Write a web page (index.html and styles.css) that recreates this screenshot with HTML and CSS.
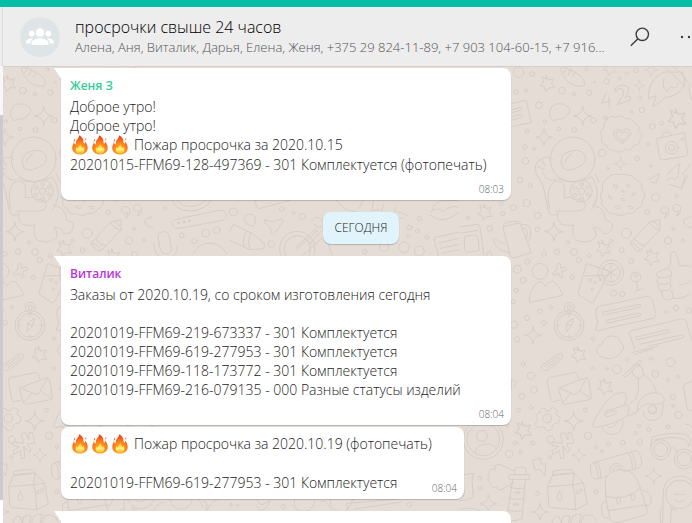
FILE: index.html
```html
<!DOCTYPE html>
<html lang="ru">
<head>
<meta charset="utf-8">
<title>просрочки свыше 24 часов</title>
<meta name="viewport" content="width=device-width, initial-scale=1">
<link rel="stylesheet" href="styles.css">
</head>
<body>
<svg class="defs" aria-hidden="true">
  <defs>
    <radialGradient id="flame-outer" cx="50%" cy="80%" r="75%">
      <stop offset="0" stop-color="#ffb62e"/><stop offset=".5" stop-color="#ff8a1c"/><stop offset="1" stop-color="#ec3f1c"/>
    </radialGradient>
    <linearGradient id="flame-inner" x1="0" y1="0" x2="0" y2="1">
      <stop offset="0" stop-color="#ffc62e"/><stop offset=".6" stop-color="#fff27a"/><stop offset="1" stop-color="#ffb52b"/>
    </linearGradient>
    <symbol id="fire" viewBox="0 0 16 20">
      <path fill="url(#flame-outer)" d="M6.800.3C9.600 1.400 11.600 3.800 11.400 6.600c0 1.200.4 1.900 1 1.900.8-.1.900-1 .6-2.100 1.600 1.500 2.700 4.200 2.700 6.700 0 4.100-3.400 6.500-7.700 6.500S.300 17.200.300 13.100c0-2.300.8-4.200 2-5.500 0 1 .3 1.700.9 1.800.8 0 .8-1.200.8-2.200C4.200 4.400 7.600 3.400 6.800.3z"/>
      <path fill="#f4611d" d="M2.300 3.800c.9.900.9 2.100.1 2.800-.8-.8-.6-1.900-.1-2.800zM13.700 3.200c.8.800.8 1.700.2 2.400-.7-.700-.7-1.600-.2-2.400zM1.100 6.500l.5 1-.6.5z"/>
      <path fill="url(#flame-inner)" d="M8.300 8.500c.1 2.200 1.800 3.200 2 4.600.6-.2.800-.8.800-1.400 1.100 1.200 1.500 2.600 1.200 4-.5 1.900-2.200 2.900-4.300 2.900-2.200 0-4-1.200-4.200-3.200-.2-1.300.2-2.400.9-3.300.1.800.4 1.200.9 1.200C6 11.500 8.300 10.800 8.300 8.500z"/>
    </symbol>
    <path id="star" d="M-4-22 L4-8 20-12 12 3 22 16 5 15-4 27-9 12-22 9-11-2-16-18-3-11Z"/>
    <path id="spark" d="M0-28Q2-2 28 0 2 2 0 28-2 2-28 0-2-2 0-28Z"/>
    <path id="plus" d="M-5-20q6-6 9 0l1 12 12-4q8 2 4 9L8 3l4 14q-3 7-8 2L-1 7l-13 6q-8-2-3-8l9-7z"/>
    <g id="drift">
      <g transform="translate(460 0) scale(.33333)">
        <use href="#star" x="262" y="248"/><use href="#spark" transform="translate(538 257) scale(.6)"/>
        <use href="#spark" x="368" y="348"/><use href="#spark" transform="translate(252 412) scale(.9)"/>
        <use href="#star" transform="translate(651 353) scale(1.200)"/><use href="#spark" transform="translate(482 491) scale(.7)"/>
        <use href="#spark" transform="translate(574 210) scale(.7)"/><use href="#star" transform="translate(450 202) scale(.9)"/>
        <path d="M301 207q4-10 14-5l46 24q18 20 10 32-28 3-46-12-18-18-24-39zM320 200l-8 18M333 206l-9 20M345 214l-8 18"/>
        <path d="M440 276l-16 34 28-8M446 290l2 34M467 275q10-16 20-7 10 12-5 28l-10 18 40-14-2-12-16 4q18-20 8-32-20-12-36 6z"/>
        <path d="M566 275q10-48 50-59l50 0q14 24 2 48-20 28-52 28-12 14-39 29l12-35-23 10zM620 206l56 54M612 236q-8 25 10 40 4-20 16-14 14 7 17-14M640 200q30 20 45 50M690 252q-8 20 6 50"/>
        <path d="M150 312l48-12 16 68-60 12M153 330l30-8q6 2 2 8l-30 8M155 350l28-7q6 3 2 9l-30 8"/>
        <path d="M272 326q10-18 28-14 12-4 22 8 14 8 2 22-10 16-30 16-18 8-24-6-4-14 2-26z"/>
        <path d="M440 360q12-16 26-8 18-10 30 4 18-4 26 12 18 6 14 22 16 14 4 28 0 18-18 18-10 20-26 12-20 16-34 2-18 4-22-14-22-8-14-26-10-16 6-26-2-20 8-24z"/>
        <path d="M487 430q-32-16-26-34 10-16 26-2 10-14 24-2 10 14-24 38zM487 422q-24-12-18-24 8-10 18 4 8-12 18-3 5 10-18 23z"/>
        <path d="M591 416l82-18 10 62q0 8-6 8l-72 12q-6-2-7-8zM606 410l2-10 20-5 4 8"/><circle cx="635" cy="443" r="19"/><circle cx="635" cy="443" r="9"/><circle cx="666" cy="418" r="3"/>
        <circle cx="338" cy="478" r="67"/><path d="M304 490q-4-26 20-34 36-14 50 10 10 22-20 36-46 22-50-12zM316 488q0-14 20-28M230 525q-16-36 18-50 16-8 30 4M246 480l10 18M232 500l20 8"/>
        <path d="M622 525q16-24 38-36l-6 36M666 525l26-34"/>
        <circle cx="176" cy="217" r="16"/><circle cx="217" cy="222" r="7"/><circle cx="306" cy="272" r="10"/><circle cx="168" cy="276" r="7"/><circle cx="198" cy="271" r="5"/><circle cx="237" cy="316" r="10"/><circle cx="342" cy="282" r="5"/><circle cx="388" cy="278" r="8"/><circle cx="440" cy="244" r="8"/><circle cx="478" cy="235" r="5"/><circle cx="500" cy="220" r="5"/><circle cx="528" cy="212" r="7"/><circle cx="403" cy="247" r="3"/><circle cx="379" cy="208" r="5"/><circle cx="539" cy="294" r="6"/><circle cx="546" cy="330" r="8"/><circle cx="514" cy="336" r="4"/><circle cx="577" cy="380" r="9"/><circle cx="605" cy="370" r="6"/><circle cx="564" cy="433" r="5"/><circle cx="426" cy="459" r="11"/><circle cx="400" cy="361" r="8"/><circle cx="435" cy="353" r="5"/><circle cx="343" cy="390" r="7"/><circle cx="297" cy="387" r="5"/><circle cx="254" cy="364" r="5"/><circle cx="202" cy="394" r="6"/><circle cx="195" cy="441" r="7"/><circle cx="222" cy="447" r="4"/><circle cx="196" cy="483" r="10"/><circle cx="531" cy="475" r="7"/><circle cx="443" cy="506" r="4"/><circle cx="572" cy="498" r="4"/>
      </g>
      <g transform="translate(460 175) scale(.33333)">
        <path d="M232 0q18 24 22 50 8 52 14 64 12 14 28 0M246-8l14 18q20 10 28 2M268 100q-12-60 14-80 20-8 30 10 4 22 0 38 20-6 36 6 26-2 28 14 0 20-26 20l-64 0M293 114q-4 22 12 34 14 6 36 2-8 36 10 46 30 12 52-6 12-14-4-32 26-2 28 16 22 8 30-16 4-18-20-22-4-28-18-38l-22-8M295 10q40 24 100-4 20 30 16 58-4 26-16 40M405-5l12 26"/>
        <circle cx="364" cy="48" r="33"/><circle cx="365" cy="49" r="10"/><circle cx="365" cy="27" r="5"/><circle cx="384" cy="37" r="5"/><circle cx="384" cy="59" r="5"/><circle cx="365" cy="71" r="5"/><circle cx="345" cy="60" r="5"/><circle cx="345" cy="38" r="5"/>
        <path d="M440 10q16-16 34-12l24 0q20 2 30 16 20 10 18 28 16 18 2 34 0 20-18 26-10 18-28 12-20 14-38 2-20 4-26-16-18-8-12-24-10-18 2-30-4-24 12-36zM461 28q16 2 12 12-14 0-12-12zM500 30q10-6 12 4-8 8-12-4zM446 62q12 0 10 10-10 2-10-10zM484 70q12-2 10 8-10 4-10-8zM516 60q2-12 12-6 0 10-12 6zM466 96q10-8 16 2-8 8-16-2zM505 94q10-4 14 6-10 6-14-6zM484 48q6-6 12 2-4 6-12-2z"/>
        <path d="M568 14l28-18M575 22l14 2 10-28M622 14q14-12 22 0l12-10M628 28l36 12 12-40M664 42l20-42"/>
        <circle cx="587" cy="67" r="12"/><circle cx="649" cy="62" r="5"/><circle cx="562" cy="112" r="7"/>
        <path d="M622 98q-18-12-20 8 4 16 18 6-2 14-8 18 16-4 14-26zM658 92q-18-12-20 8 4 16 18 6-2 14-8 18 16-6 14-26zM692 126q-24 4-20 18 2 10 24 14"/>
        <path d="M512 202l56-60 32-8 0 30-58 62q-8 4-14 0l-16-18zM568 142q10 20 32 22M524 190q10 20 30 22M580 138l16 14M512 202q14 4 30 24"/>
        <circle cx="499" cy="175" r="15"/><circle cx="454" cy="197" r="5"/><circle cx="624" cy="197" r="11"/><circle cx="669" cy="197" r="5"/><circle cx="639" cy="162" r="4"/><circle cx="485" cy="225" r="7"/><circle cx="514" cy="259" r="7"/>
        <use href="#star" x="430" y="218"/><use href="#star" x="576" y="244"/><use href="#star" x="75" y="109"/><use href="#spark" x="282" y="170"/>
        <circle cx="180" cy="14" r="8"/><circle cx="210" cy="32" r="6"/><circle cx="200" cy="84" r="11"/><circle cx="160" cy="97" r="9"/><circle cx="123" cy="86" r="6"/><circle cx="129" cy="116" r="6"/><circle cx="233" cy="122" r="10"/><circle cx="232" cy="163" r="7"/><circle cx="89" cy="161" r="8"/><circle cx="24" cy="128" r="5"/><circle cx="324" cy="202" r="5"/><circle cx="342" cy="231" r="10"/><circle cx="291" cy="230" r="8"/><circle cx="252" cy="237" r="7"/><circle cx="356" cy="255" r="8"/><circle cx="388" cy="242" r="6"/><circle cx="202" cy="260" r="8"/><circle cx="172" cy="283" r="12"/><circle cx="190" cy="316" r="9"/><circle cx="169" cy="346" r="6"/><circle cx="337" cy="307" r="6"/>
        <path d="M0 156l50-8q8 0 10 8l12 84M2 174l50-8M14 184l32-4q6 2 8 10l4 36-36 6q-6-2-8-8zM130 155l50-12 34 90-52 16q-8 0-12-10zM130 155q2-16 20-14 20-6 30 2M184 150q26-8 28 16 2 24-10 38M186 160q14-4 16 12l-4 22M134 206q-14 0-26-14-6-4-8 2 6 32 46 38M78 246q8-30 16-12l4 14"/>
        <circle cx="240" cy="289" r="24"/><path d="M208 378q0-40 30-58 12-2 18 14 12-18 26-14 16 14 26 36 0 6-6 6l-88 20q-6 0-6-4z"/><use href="#plus" x="297" y="288"/>
        <path d="M381 266l68 24-48 90q-4 4-10 2l-34-22q-4-4-2-10zM374 302l70 0"/><circle cx="453" cy="293" r="38"/><circle cx="453" cy="293" r="28"/><path d="M430 278l46 30M453 265v56M430 309l46-32"/><circle cx="390" cy="315" r="5"/><circle cx="420" cy="313" r="4"/><circle cx="406" cy="323" r="4"/><circle cx="397" cy="343" r="4"/>
        <circle cx="527" cy="306" r="15"/><circle cx="527" cy="302" r="5"/><path d="M530 321l4 24M525 349l24-8"/><circle cx="461" cy="355" r="9"/><circle cx="487" cy="357" r="8"/>
        <path d="M632 236q6-12 14-4 8 18 12 42 26-6 34 2M632 236q4 30-8 44l-22 8q-18 6-10 18l22 2 20-6q4-14-8-18M596 308q-10 12 0 20l28-2q14-8 6-22M596 328q-4 16 8 20l22-2q10-8 6-20M604 348q0 22 16 28l18-6q4-14-6-24M658 330q20 0 34-12M640 370q26 4 52-14"/>
        <circle cx="327" cy="451" r="45"/><circle cx="327" cy="451" r="36"/><circle cx="328" cy="397" r="15"/><circle cx="328" cy="397" r="6"/><path d="M339 430l-20 16 0 24 16-18zM319 446l16 6M327 416v8M327 480v8M290 451h8M356 451h8"/>
        <path d="M410 402q0-6 8-8l144-30q10 0 14 8l12 44q0 10-8 14l-130 28-36 10q-8 0-8-6l8-18q-10-26-4-42zM428 412l110-24q8 2 4 8l-110 24q-8 0-4-8zM440 436l96-22q10 0 6 8l-98 22q-10 0-4-8zM510 480q-8-6 2-12l150-36q12-2 16 6l18 60M510 480l14 42M530 486l92-22q8 0 6 8l-94 22q-10 0-4-8zM540 508l124-28q10 2 6 8l-106 26"/>
        <path d="M410 525q2-14 16-18 8-26 34-24 20 4 22 20 12 8 8 22"/><use href="#spark" transform="translate(219 481) scale(.9)"/>
        <circle cx="240" cy="409" r="7"/><circle cx="273" cy="397" r="5"/><circle cx="201" cy="429" r="8"/><circle cx="252" cy="443" r="7"/><circle cx="162" cy="449" r="11"/><circle cx="171" cy="493" r="8"/><circle cx="160" cy="380" r="6"/><circle cx="399" cy="491" r="5"/><circle cx="648" cy="399" r="8"/><circle cx="619" cy="411" r="5"/><circle cx="687" cy="407" r="8"/>
      </g>
      <g transform="translate(460 350) scale(.33333)">
        <path d="M246 46l42-30q14-8 20 0 0 10-10 18l-34 26q-16 6-20-4zM254 48l38-26q10-2 4 6l-34 24M408 0q10 28 42 26 30-4 36-26M515 8l80-20M520 14l60-18"/>
        <use href="#star" x="356" y="12"/><use href="#star" x="435" y="108"/><use href="#star" transform="translate(190 238) scale(1.100)"/>
        <path d="M300 150l-20 5q-8-2-8-8l-10-54q0-8 6-10l78-16q8 2 10 20M298 113l80-30q6 0 8 8l8 50q0 8-6 8l-72 14q-6 0-8-6l-12-36zM298 113l44 20q10 2 14-8l24-40M306 160l26-30M358 122l34 24"/>
        <path d="M240 186q-2-12 12-12l6 8 12 0q4-14 16-6 10 4 2 16l8 8q8-2 2 14-4 10-14 6l-8 8q4 12-10 14-10 2-12-10l-10-2q-10 8-16-4-4-10 4-14l0-8q-10-8 8-18z"/><circle cx="262" cy="205" r="13"/>
        <use href="#spark" x="341" y="213"/><use href="#spark" transform="translate(357 316) scale(.75)"/><use href="#spark" transform="translate(581 378) scale(.9)"/><use href="#spark" transform="translate(240 486) scale(.9)"/><use href="#spark" transform="translate(85 461) scale(.9)"/>
        <path d="M302 252l12-4 10 22 0-22 10 0 8 32q-12 0-24 2l12 18q-2 8-8 6l-14-18 4 36-10 2-4-24-20 12-2-12 20-12-20-4 0-10 30 4z"/>
        <path d="M398 224q24-60 66-92 18-8 34-2 4 20-6 36-28 10-56 18M398 224q0 10 10 8 60-10 96-36l4-22q-4-12-18-8M436 190q30-14 34-4-4 12-32 14-6-4-2-10zM424 230q8 22 36 24 28-4 30-42M440 226q14 18 30-8M490 76l50-46q6 4-2 12l-40 38q-8 4-8-4z"/><ellipse cx="533" cy="64" rx="16" ry="22" transform="rotate(-25 533 64)"/><path d="M534 86q10 56-24 76M552 74q28 20 38 54M532 182q-4-36 36-52 38-8 46 20-2 12-16 12l-40 0q-16 10-26 20zM534 184l-26 14M550 184q-2 26 30 28 30-4 30-48M564 180q8 16 22 8 8-14-2-22"/><circle cx="577" cy="179" r="12"/>
        <path d="M696 92l-24 12q-4 6 0 14l10 60 14 4M676 222q10 0 20 8"/>
        <circle cx="602" cy="299" r="30"/><circle cx="602" cy="299" r="21"/><circle cx="673" cy="327" r="30"/><circle cx="673" cy="327" r="21"/><path d="M572 288l4-26q50-18 100-10 20 8 14 34M584 270q50-14 88-2 12 4 14 20M631 296q10-10 20 10"/>
        <circle cx="660" cy="433" r="43"/><path d="M608 520l2-100q6-40 50-42 34 0 46 34M645 434q6-6 12 0M662 434q6-6 12 0M645 450q14 14 28-2M602 520l-2-40q8-10 10-6M636 476q-6 20-4 42M630 470q10 8 20 10"/>
        <path d="M391 350q0-8 10-12l124-36q14 2 20 26 2 20-10 26l-46 12M391 350q-2 32 14 38l38-10M410 336q14 14 12 48M402 338q14 20 12 48M504 308q16 22 12 48M514 306q14 20 12 48M450 364q-2-22 20-24 18 2 16 22M460 360q0-12 12-12 6 2 6 10M436 388q6-20 34-28 32-4 48 10 18 22 26 54l18 60q0 10-16 14l-74 20q-16 0-22-12l-12-60zM438 426q-4 12 2 14 60 14 104-28M470 444q6-6 10 0l2 14q-2 8-8 4zM513 434q6-6 10 0l2 12q-2 8-8 4zM548 420q20 2 26 28 0 18-16 22M436 456q-12 0-12 16l4 24q6 12 16 8M440 470l6 12 114-18"/>
        <path d="M263 410l15-34 65-6 27 29 12 62-34 18-74-6q-8 0-8-8zM263 410l76-6 31-5M339 404q8 40 8 74M278 376v-12q30-8 60-4l5 10M278 376q40-8 65-6l-6 34M298 424q-14 26 0 28 16-2 0-28zM349 424l16-8q6 4 0 8l-14 8q-6-2-2-8z"/>
        <path d="M218 332l24-8 2 18 14 0-4 36-14-20-14 2z"/>
        <path d="M148 374h60v14h-60zM164 374v-18q16-10 34 0v18M158 388l-18 118q20 12 46 0l10-118M150 412q20 8 44 2M146 444q20 8 46 2M144 480q20 8 44 2M166 428q8-14 14 0zM160 464q8-14 16 0zM164 364l-44-20q-20-2-14 14-22-4-18 10-8 6 0 14-10 8 2 16 4 20 20 12 2 14 16 8l34-20"/>
        <circle cx="70" cy="268" r="60"/><circle cx="70" cy="268" r="49"/><circle cx="66" cy="258" r="16"/><path d="M44 308q10-28 36-26 24 0 30 18M0 376l40-6-4 20 4 50q-10 10-40 12M0 440l4-12 6 12 4-20M0 478q24-10 60 4"/>
        <path d="M276 520q0-20 20-22l8 20M304 520l4-20q14-6 22-2l-4 22M332 520l6-22q16-8 26-4l-6 26M362 520l10-24q30-6 38 16M154 88l16 8-8 18M154 120v-30"/>
        <circle cx="190" cy="42" r="6"/><circle cx="213" cy="77" r="11"/><circle cx="222" cy="120" r="10"/><circle cx="185" cy="139" r="9"/><circle cx="175" cy="180" r="6"/><circle cx="214" cy="172" r="6"/><circle cx="376" cy="180" r="6"/><circle cx="399" cy="55" r="5"/><circle cx="441" cy="57" r="4"/><circle cx="471" cy="58" r="13"/><circle cx="586" cy="72" r="10"/><circle cx="632" cy="37" r="13"/><circle cx="501" cy="29" r="5"/><circle cx="573" cy="26" r="5"/><circle cx="623" cy="90" r="5"/><circle cx="653" cy="81" r="5"/><circle cx="639" cy="140" r="8"/><circle cx="639" cy="168" r="4"/><circle cx="655" cy="195" r="11"/><circle cx="624" cy="231" r="6"/><circle cx="537" cy="227" r="5"/><circle cx="566" cy="239" r="6"/><circle cx="526" cy="249" r="5"/><circle cx="539" cy="276" r="8"/><circle cx="488" cy="278" r="7"/><circle cx="445" cy="281" r="6"/><circle cx="426" cy="303" r="5"/><circle cx="407" cy="291" r="5"/><circle cx="384" cy="257" r="11"/><circle cx="272" cy="269" r="11"/><circle cx="218" cy="279" r="6"/><circle cx="166" cy="279" r="6"/><circle cx="147" cy="312" r="11"/><circle cx="182" cy="306" r="5"/><circle cx="270" cy="322" r="5"/><circle cx="233" cy="430" r="6"/><circle cx="408" cy="425" r="6"/><circle cx="60" cy="385" r="6"/><circle cx="60" cy="414" r="6"/><circle cx="142" cy="226" r="5"/>
      </g>
    </g>
  </defs>
</svg>

<div class="accent"></div>
<div class="app">
  <div class="list-edge"><div class="edge-head"></div><div class="edge-gap"></div><div class="edge-thumb"></div><div class="edge-end"></div></div>
  <main class="chat">
    <header class="header">
      <svg class="avatar" viewBox="0 0 40 40" role="img" aria-label="Группа">
        <circle cx="20" cy="20" r="20" fill="#dfe5e7"/>
        <g fill="#fff"><circle cx="20" cy="15.500" r="4.300"/><circle cx="11.700" cy="16.600" r="2.900"/><circle cx="28.300" cy="16.600" r="2.900"/>
        <path d="M20 21.300c3.300 0 8.400 1.500 8.400 4.700v1.900H11.600V26c0-3.200 5.100-4.700 8.400-4.700zM12.300 21.200c-2.100 0-6.300 1.200-6.300 3.600v1.700h4.400c0-2.300.9-3.900 2.800-5.200zM27.700 21.200c2.100 0 6.300 1.200 6.300 3.600v1.700h-4.400c0-2.300-.9-3.900-2.800-5.200z"/></g>
      </svg>
      <div class="titles">
        <h1>просрочки свыше 24 часов</h1>
        <p>Алена, Аня, Виталик, Дарья, Елена, Женя, +375 29 824-11-89, +7 903 104-60-15, +7 916...</p>
      </div>
      <button class="icon" type="button" aria-label="Поиск"><svg width="20" height="20" viewBox="0 0 20 20" fill="none" stroke="#3c3c3c" stroke-width="1.400"><circle cx="12.300" cy="7.300" r="6.200"/><path d="M7.900 11.700.8 18.800"/></svg></button>
      <button class="more" type="button" aria-label="Меню"><svg width="18" height="4" viewBox="0 0 18 4" fill="#3c3c3c"><circle cx="2" cy="2" r="1.200"/><circle cx="9" cy="2" r="1.200"/><circle cx="16" cy="2" r="1.200"/></svg></button>
    </header>

    <div class="thread">
      <svg class="wallpaper" viewBox="3 66 689 457" preserveAspectRatio="xMinYMin slice" aria-hidden="true">
        <use href="#drift"/><use href="#drift" x="-539"/>
        <g transform="translate(0 175) scale(.33333)">
          <path d="M474 186q0-16 16-16t18 16l6 34q0 16-14 16-18 0-20-16zM460 204q2 44 42 48 30-4 30-40M500 250v14M517 150q-4-12 8-16l130-28q18-2 24 12 2 14-12 18l-128 24q-18 2-22-10zM516 74q10 32 52 34 50-2 66-34M530 74q14 20 40 20 38-2 48-20M580 236q18-32 50-32 34 2 50 32"/>
          <circle cx="535" cy="144" r="3"/><circle cx="552" cy="141" r="3"/><circle cx="568" cy="137" r="3"/><circle cx="546" cy="181" r="7"/><circle cx="583" cy="198" r="8"/><circle cx="617" cy="174" r="12"/><circle cx="650" cy="166" r="10"/><circle cx="495" cy="100" r="5"/>
        </g>
        <g transform="translate(230 175) scale(.33333)">
          <path d="M74 76l10 26 96-26M104 134l22 6 30-8q8 4 2 10l-26 34q-4 6-8 0l-4-20-16-14q-4-8 0-8zM0 168l10-20 54 26 38 30q4 18-8 18l-34 2L0 196M64 174q-14 18-4 50M50 168q-14 20-8 48M48 120q14-8 26 4 8 12 0 20-4 8-2 10-22-2-28-18-2-10 4-16M245 138q14-16 26-8l10 14M252 148l16 10 12-8M240 204l34-36M230 196l14 12"/>
          <circle cx="202" cy="222" r="53"/><circle cx="202" cy="222" r="40"/><path d="M200 224l64-60M196 220l60-58M220 240l66-60 20 60M320 76q24 34 56 34M400 76l-12 24M430 80l-4 28 24-6M462 86l-10 30 26 2M496 96l-4 34 30 0M504 110l28 12"/>
          <circle cx="124" cy="207" r="10"/><circle cx="155" cy="102" r="7"/><circle cx="190" cy="114" r="5"/><circle cx="217" cy="125" r="9"/><circle cx="10" cy="111" r="12"/><circle cx="404" cy="230" r="7"/><circle cx="462" cy="216" r="14"/><circle cx="522" cy="217" r="16"/><circle cx="568" cy="228" r="15"/><circle cx="539" cy="157" r="7"/><circle cx="568" cy="131" r="7"/><circle cx="591" cy="187" r="6"/><circle cx="562" cy="168" r="6"/><circle cx="535" cy="182" r="5"/>
          <path d="M604 112q10-36 40-36h40M600 120q40 34 86-8M610 106q20-10 30 4 20-20 44-14M612 194q0-8 10-8l64-14M612 194l14 48M626 204l60-14M632 220l54-12M636 234l50-10"/>
        </g>
        <g transform="translate(230 350) scale(.33333)">
          <path d="M194 448q-10 36 30 36 30-4 30-36M300 448q0 38 38 38 20-4 30-38M354 480l-4-20 150-12M370 478l144-22M80 448q8 30 40 4l-10 20q-24 20-30-4M270 456q20-14 36 30M-40 450q-24 10-30 36M-80 452q20 10 6 32M-180 448q4 24 30 30 32-2 36-30M-94 448l14 26M-200 456q-24 6-30 30"/>
          <circle cx="22" cy="466" r="4"/><circle cx="3" cy="464" r="4"/><circle cx="538" cy="464" r="7"/><circle cx="160" cy="470" r="7"/>
        </g>
      </svg>

      <article class="bubble wide tail">
        <h2 class="green">Женя З</h2>
        <p>Доброе утро!</p>
        <p>Доброе утро!</p>
        <p class="fires"><span class="emoji" role="img" aria-label="Огонь"><svg><use href="#fire"/></svg><svg><use href="#fire"/></svg><svg><use href="#fire"/></svg></span>Пожар просрочка за 2020.10.15</p>
        <p>20201015-FFM69-128-497369 - 301 Комплектуется (фотопечать)</p>
        <time>08:03</time>
      </article>

      <div class="day">СЕГОДНЯ</div>

      <article class="bubble wide tail">
        <h2 class="violet">Виталик</h2>
        <p>Заказы от 2020.10.19, со сроком изготовления сегодня</p>
        <p><br></p>
        <p>20201019-FFM69-219-673337 - 301 Комплектуется</p>
        <p>20201019-FFM69-619-277953 - 301 Комплектуется</p>
        <p>20201019-FFM69-118-173772 - 301 Комплектуется</p>
        <p>20201019-FFM69-216-079135 - 000 Разные статусы изделий</p>
        <time>08:04</time>
      </article>

      <article class="bubble compact">
        <div>
          <p class="fires"><span class="emoji" role="img" aria-label="Огонь"><svg><use href="#fire"/></svg><svg><use href="#fire"/></svg><svg><use href="#fire"/></svg></span>Пожар просрочка за 2020.10.19 (фотопечать)</p>
          <p><br></p>
          <p>20201019-FFM69-619-277953 - 301 Комплектуется</p>
        </div>
        <time>08:04</time>
      </article>

      <article class="bubble wide tail next"></article>
    </div>
  </main>
</div>
</body>
</html>
```
FILE: styles.css
```css
* { box-sizing: border-box; }

body {
  margin: 0;
  height: 100vh;
  display: flex;
  flex-direction: column;
  overflow: hidden;
  background: #fff;
  color: #1c1c1c;
  font-family: "Open Sans", "Noto Sans", sans-serif;
  font-size: 14px;
  font-weight: 300;
  line-height: 19px;
}

h1, h2, p { margin: 0; font-weight: 300; }
.defs { position: absolute; width: 0; height: 0; }

.accent { flex: none; height: 7px; background: #00bfa5; }
.app { flex: 1; min-height: 0; display: flex; }

.list-edge { flex: none; width: 3px; display: flex; flex-direction: column; }
.edge-head { height: 59px; background: #ededed; border-right: 1px solid #dadada; }
.edge-gap { height: 49px; background: #f7f7f7; }
.edge-thumb { flex: 1; background: #cbcbcb; }
.edge-end { height: 23px; background: #fff; }

.chat { flex: 1; min-width: 0; display: flex; flex-direction: column; }

.header {
  flex: none;
  height: 59px;
  display: flex;
  align-items: center;
  padding-left: 17px;
  background: #ededed;
  overflow: hidden;
}
.avatar { flex: none; width: 40px; height: 40px; }
.titles { flex: 1; min-width: 0; padding: 0 16px 0 15px; }
.titles h1 { font-size: 16px; line-height: 21px; color: #000; }
.titles p {
  font-size: 13px;
  line-height: 18px;
  color: #555;
  white-space: nowrap;
  overflow: hidden;
  text-overflow: ellipsis;
}
button { border: 0; padding: 0; background: none; display: flex; flex: none; }
button svg { flex: none; }
.icon { width: 20px; margin-right: 30px; }
.more { width: 12px; overflow: hidden; }

.thread {
  position: relative;
  flex: 1;
  min-height: 0;
  display: flex;
  flex-direction: column;
  align-items: flex-start;
  padding: 2px 31px 0 58px;
  overflow: hidden;
  background: #e5dcd6;
  box-shadow: inset 0 1px 0 #d6cec8;
}
.wallpaper {
  position: absolute;
  inset: 0;
  width: 100%;
  height: 100%;
  fill: none;
  stroke: #d7cdc7;
  stroke-width: 3;
  stroke-linejoin: round;
  stroke-linecap: round;
}

.bubble {
  position: relative;
  flex: none;
  max-width: 100%;
  padding: 7px 7px 3px 9px;
  border-radius: 8px;
  background: #fff;
  box-shadow: 0 1px 1px rgba(0, 0, 0, .2);
}
.wide { width: 450px; }
.tail { border-top-left-radius: 0; }
.tail::before {
  content: "";
  position: absolute;
  top: 0;
  left: -7px;
  width: 8px;
  height: 12px;
  background: #fff;
  clip-path: polygon(0 0, 100% 0, 100% 100%);
}
.bubble h2 { font-size: 12px; line-height: 22px; font-weight: 600; }
.green { color: #35cd96; }
.violet { color: #ba33dc; }
.fires { display: flex; line-height: 20px; }
.emoji { display: flex; gap: 4px; padding: 0 6px 0 2px; }
.emoji svg { width: 16px; height: 20px; }

time {
  display: block;
  font-size: 10px;
  line-height: 15px;
  color: #666;
  text-align: right;
}
.wide time { margin-top: 8px; }

.day {
  position: relative;
  align-self: center;
  margin: 12px 0;
  padding: 6px 12px;
  border-radius: 8px;
  background: #e1f3fb;
  box-shadow: 0 1px 1px rgba(0, 0, 0, .2);
  font-size: 12px;
  line-height: 20px;
}
.compact {
  display: flex;
  align-items: flex-end;
  margin-top: 2px;
}
.compact > div { padding-bottom: 4px; }
.next { margin-top: 12px; height: 80px; }
```
